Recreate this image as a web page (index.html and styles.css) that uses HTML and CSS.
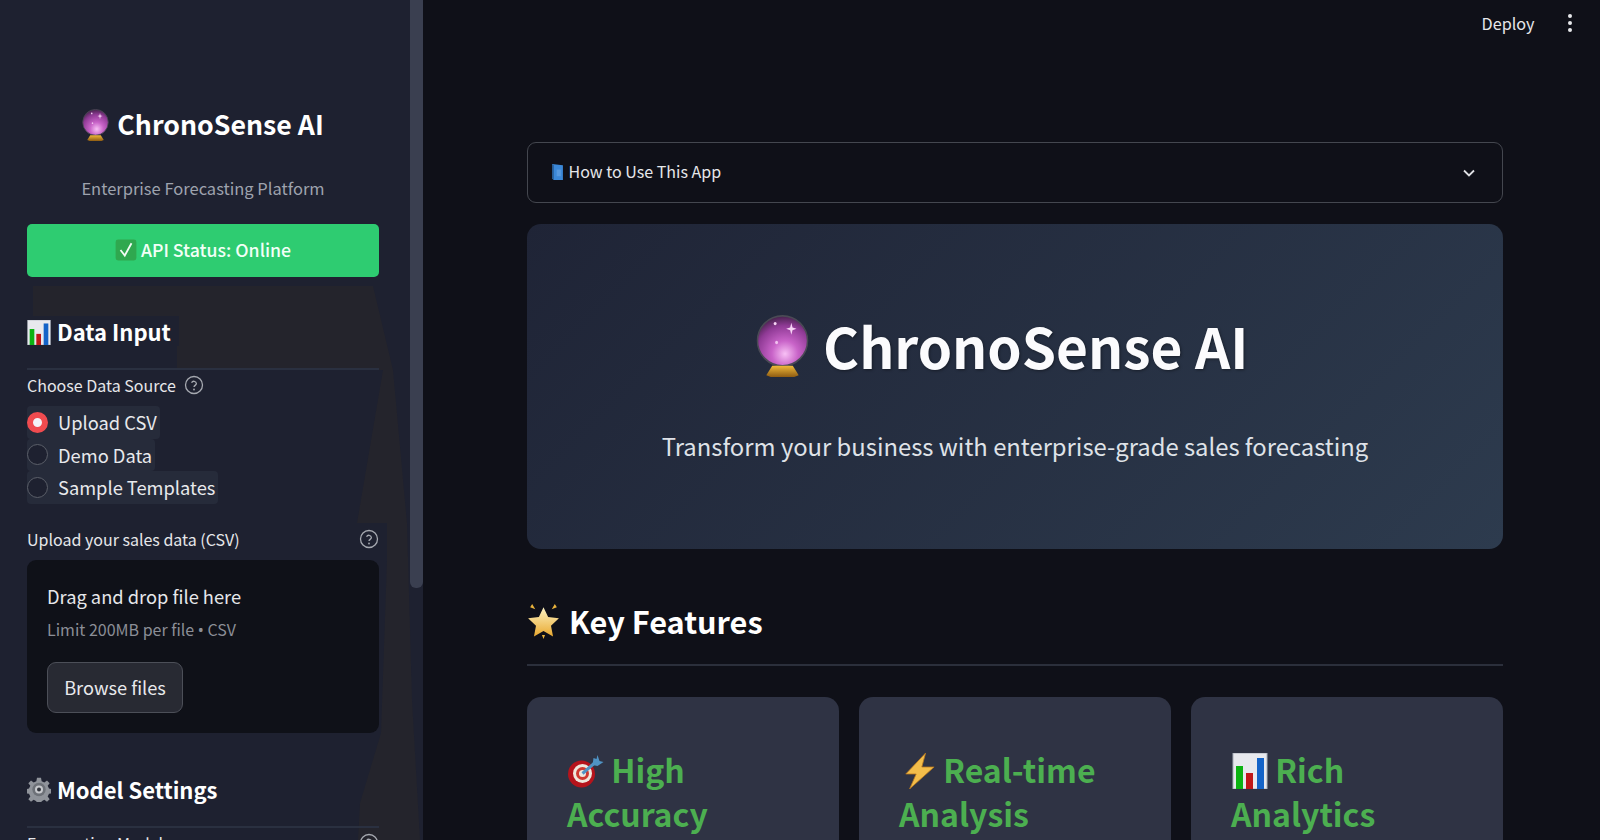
FILE: index.html
```html
<!DOCTYPE html>
<html lang="en">
<head>
    <meta charset="UTF-8">
    <meta name="viewport" content="width=device-width, initial-scale=1.0">
    <title>ChronoSense AI</title>
    <link rel="stylesheet" href="styles.css">
</head>
<body>

<!-- Shared emoji drawings -->
<svg class="defs" width="0" height="0" aria-hidden="true">
    <defs>
        <radialGradient id="ballFill" cx="55%" cy="76%" r="75%">
            <stop offset="0" stop-color="#f8c0f5"/>
            <stop offset="0.35" stop-color="#c863c8"/>
            <stop offset="0.75" stop-color="#8f3a95"/>
            <stop offset="1" stop-color="#4a2350"/>
        </radialGradient>
        <linearGradient id="baseFill" x1="0" y1="0" x2="0" y2="1">
            <stop offset="0" stop-color="#f0b93a"/>
            <stop offset="1" stop-color="#8f5c12"/>
        </linearGradient>
        <linearGradient id="starFill" x1="0" y1="0" x2="0" y2="1">
            <stop offset="0" stop-color="#fdf3c4"/>
            <stop offset="1" stop-color="#e9a92f"/>
        </linearGradient>
        <symbol id="emojiBall" viewBox="0 0 36 36" preserveAspectRatio="none">
            <ellipse cx="18" cy="15" rx="17" ry="14.500" fill="url(#ballFill)" stroke="#4a4a55" stroke-width="1"/>
            <path d="M24 4.500l.8 2.700 2.700.8-2.700.8-.8 2.700-.8-2.700-2.700-.8 2.700-.8z" fill="#f7d4f5"/>
            <circle cx="13" cy="5" r="1" fill="#f7d4f5"/>
            <circle cx="14" cy="16" r="1" fill="#f0c0ee"/>
            <path d="M11 29.500h14l4 5.500-3 1H10l-3-1z" fill="url(#baseFill)"/>
        </symbol>
        <symbol id="emojiCheck" viewBox="0 0 36 36">
            <rect x="1" y="1" width="34" height="34" rx="4" fill="#2fa84f"/>
            <path d="M9 18l7 9 11-20" fill="none" stroke="#f2fbf4" stroke-width="3"/>
        </symbol>
        <symbol id="emojiChart" viewBox="0 0 36 36" preserveAspectRatio="none">
            <rect x="1" y="0" width="34" height="36" fill="#e8e9ee" stroke="#aab0ba"/>
            <rect x="4" y="13" width="7" height="23" fill="#0cb312"/>
            <rect x="14" y="20" width="7" height="16" fill="#c01818"/>
            <rect x="25" y="5" width="7" height="31" fill="#1463c8"/>
        </symbol>
        <symbol id="emojiGear" viewBox="0 0 36 36">
            <path d="M15 1h6l1 5 4 2 4-3 4 4-3 4 2 4 5 1v6l-5 1-2 4 3 4-4 4-4-3-4 2-1 5h-6l-1-5-4-2-4 3-4-4 3-4-2-4-5-1v-6l5-1 2-4-3-4 4-4 4 3 4-2z" fill="#8f939a" transform="translate(0 -0.500)"/>
            <circle cx="18" cy="18" r="10" fill="#6d7178"/>
            <circle cx="18" cy="18" r="6" fill="#c7c9cd"/>
            <circle cx="18" cy="18" r="3" fill="#33363e"/>
        </symbol>
        <symbol id="emojiBook" viewBox="0 0 36 36" preserveAspectRatio="none">
            <path d="M5 2l26 3v31H9l-4-3z" fill="#3b88d8"/>
            <path d="M5 2l4 3v31l-4-3z" fill="#26598f"/>
            <path d="M16 14h10v14H16z" fill="#6aa6e6" opacity="0.6"/>
        </symbol>
        <symbol id="emojiStar" viewBox="0 0 36 36">
            <path d="M18 5l4.500 9.500 10.500 1.300-7.700 7.200 2 10.500L18 28.300 8.700 33.500l2-10.500L3 15.800l10.500-1.300z" fill="url(#starFill)"/>
            <path d="M7 2l3 5-5-2zM29 2l-3 5 5-2zM16.500 32h3L18 36z" fill="#e9b33c"/>
        </symbol>
        <symbol id="emojiTarget" viewBox="0 0 36 36">
            <circle cx="14" cy="21" r="13.500" fill="#b5141c"/>
            <circle cx="15" cy="20.500" r="9.500" fill="#efe7dc"/>
            <circle cx="15" cy="20.500" r="6.500" fill="#cf3a30"/>
            <circle cx="15" cy="20.500" r="3.500" fill="#efe7dc"/>
            <path d="M15 20.500L27 10" stroke="#4f93c4" stroke-width="3"/>
            <path d="M26 5l3 1 1-4 2 6 4 1-6 4-5-1z" fill="#4f93c4"/>
        </symbol>
        <symbol id="emojiBolt" viewBox="0 0 36 36" preserveAspectRatio="none">
            <path d="M25 0L4 21h11L8 36l26-22H21z" fill="#f3bd4a" stroke="#b9781c" stroke-width="0.800"/>
        </symbol>
        <symbol id="iconHelp" viewBox="0 0 20 20">
            <circle cx="10" cy="10" r="8.500" fill="none" stroke="currentColor" stroke-width="1.300"/>
            <path d="M7.600 7.800a2.500 2.500 0 0 1 4.800.7c0 1.700-2.400 2-2.400 3.500" fill="none" stroke="currentColor" stroke-width="1.300"/>
            <circle cx="10" cy="14.500" r="0.900" fill="currentColor"/>
        </symbol>
    </defs>
</svg>

<div class="app">

    <!-- Sidebar -->
    <aside class="sidebar">
        <div class="sidebarShade"></div>
        <div class="sidebarInner">
            <h2 class="brand"><svg class="emoji brandEmoji"><use href="#emojiBall"/></svg> ChronoSense AI</h2>
            <p class="brandSub">Enterprise Forecasting Platform</p>
            <div class="statusBox"><svg class="emoji statusEmoji"><use href="#emojiCheck"/></svg> API Status: Online</div>

            <h3 class="sideHeading"><span class="sideHeadingText"><svg class="emoji sideEmoji"><use href="#emojiChart"/></svg> Data Input</span></h3>
            <hr class="sideRule">

            <div class="fieldLabel firstLabel">
                <span>Choose Data Source</span>
                <svg class="helpIcon"><use href="#iconHelp"/></svg>
            </div>
            <div class="radioGroup">
                <label class="radioRow"><span class="radioDot radioOn"></span>Upload CSV</label>
                <label class="radioRow"><span class="radioDot"></span>Demo Data</label>
                <label class="radioRow"><span class="radioDot"></span>Sample Templates</label>
            </div>

            <div class="fieldLabel spreadLabel">
                <span>Upload your sales data (CSV)</span>
                <svg class="helpIcon"><use href="#iconHelp"/></svg>
            </div>
            <div class="dropZone">
                <div class="dropTitle">Drag and drop file here</div>
                <div class="dropHint">Limit 200MB per file <span class="dropBullet">•</span> CSV</div>
                <button class="browseBtn">Browse files</button>
            </div>

            <h3 class="sideHeading modelHeading"><span class="sideHeadingText"><svg class="emoji sideEmoji"><use href="#emojiGear"/></svg> Model Settings</span></h3>
            <hr class="sideRule">
            <div class="fieldLabel spreadLabel nextLabel">
                <span>Forecasting Model</span>
                <svg class="helpIcon"><use href="#iconHelp"/></svg>
            </div>
        </div>
        <div class="scrollThumb"></div>
    </aside>

    <!-- Main content -->
    <main class="main">
        <header class="topBar">
            <span class="deploy">Deploy</span>
            <span class="dots"><i></i><i></i><i></i></span>
        </header>

        <div class="content">
            <div class="expander">
                <span class="expanderTitle"><svg class="emoji bookEmoji"><use href="#emojiBook"/></svg> How to Use This App</span>
                <svg class="chevron" viewBox="0 0 16 16"><path d="M3 5.500l5 5 5-5" fill="none" stroke="currentColor" stroke-width="1.800"/></svg>
            </div>

            <section class="hero">
                <h1 class="heroTitle"><svg class="emoji heroEmoji"><use href="#emojiBall"/></svg> ChronoSense AI</h1>
                <p class="heroSub">Transform your business with enterprise-grade sales forecasting</p>
            </section>

            <h2 class="sectionTitle"><svg class="emoji sectionEmoji"><use href="#emojiStar"/></svg> Key Features</h2>
            <hr class="sectionRule">

            <div class="cards">
                <div class="card"><h3 class="cardTitle"><svg class="emoji cardEmoji targetEmoji"><use href="#emojiTarget"/></svg> High Accuracy</h3></div>
                <div class="card"><h3 class="cardTitle"><svg class="emoji cardEmoji boltEmoji"><use href="#emojiBolt"/></svg> Real-time Analysis</h3></div>
                <div class="card"><h3 class="cardTitle"><svg class="emoji cardEmoji chartEmoji"><use href="#emojiChart"/></svg> Rich Analytics</h3></div>
            </div>
        </div>
    </main>
</div>

</body>
</html>
```

FILE: styles.css
```css
/* Page */
html, body {
    margin: 0;
    height: 100%;
    overflow: hidden;
}

body {
    background: #0f1018;
    color: #fafafa;
    font-family: "Noto Sans CJK SC", "Noto Sans", sans-serif;
}

.defs {
    position: absolute;
}

.app {
    display: flex;
    height: 840px;
    overflow: hidden;
}

.emoji {
    display: inline-block;
    vertical-align: middle;
}

/* Sidebar */
.sidebar {
    position: relative;
    flex: 0 0 423px;
    height: 840px;
    overflow: hidden;
    background: #1e2130;
    border-right: 2px solid #0f1018;
}

/* Darker blotch behind the sidebar widgets */
.sidebarShade {
    position: absolute;
    inset: 0;
    background: #24242c;
    clip-path: polygon(33px 286px, 373px 286px, 393px 370px, 407px 523px, 412px 700px, 420px 840px, 358px 840px, 360px 803px, 381px 733px, 387px 560px, 387px 523px, 357px 523px, 383px 370px, 177px 370px, 177px 323px, 33px 323px);
}

.sidebarInner {
    position: relative;
    padding: 104px 44px 0 27px;
}

.scrollThumb {
    position: absolute;
    top: 0;
    right: 0;
    width: 13px;
    height: 588px;
    background: #3a3f50;
    border-radius: 0 0 6px 6px;
}

.brand {
    margin: 0;
    text-align: center;
    font-size: 26.700px;
    font-weight: 600;
    line-height: 40px;
    color: #ffffff;
}

.brandEmoji {
    width: 27px;
    height: 32px;
    margin-top: -6px;
    margin-right: 2px;
}

.brandSub {
    margin: 32px 0 0;
    text-align: center;
    font-size: 16.500px;
    line-height: 24px;
    color: #9ea3ae;
}

.statusBox {
    margin-top: 24px;
    height: 53px;
    line-height: 51px;
    text-align: center;
    background: #2ecc71;
    border-radius: 5px;
    font-size: 17.700px;
    font-weight: 500;
    color: #f2fff7;
}

.statusEmoji {
    width: 22px;
    height: 22px;
    margin-top: -4px;
}

.sideHeading {
    margin: 39px 0 0;
    font-size: 22px;
    font-weight: 600;
    line-height: 30px;
    color: #ffffff;
    position: relative;
}

.sideHeadingText {
    display: inline-block;
    padding-right: 8px;
    background: #1e2130;
}

.sideEmoji {
    width: 24px;
    height: 25px;
    margin-top: -6px;
    margin-right: 1px;
}

.sideRule {
    margin: 22px 0 0;
    border: 0;
    height: 2px;
    background: #2a3040;
    position: relative;
}

.fieldLabel {
    display: flex;
    align-items: center;
    gap: 8px;
    font-size: 16px;
    line-height: 22px;
    color: #e6e7ea;
}

.firstLabel {
    margin-top: 4px;
}

.spreadLabel {
    justify-content: space-between;
}

.helpIcon {
    width: 20px;
    height: 20px;
    color: #a6a9b0;
}

.radioGroup {
    display: flex;
    flex-direction: column;
    align-items: flex-start;
    margin-top: 10px;
    margin-bottom: 24px;
}

.radioRow {
    display: flex;
    align-items: center;
    gap: 10px;
    height: 32.500px;
    padding-right: 3px;
    background: #262b3a;
    border-radius: 4px;
    font-size: 18.300px;
    color: #e8e9ec;
}

.radioDot {
    box-sizing: border-box;
    width: 21px;
    height: 21px;
    border: 1.500px solid #5b5f69;
    border-radius: 50%;
    background: #1e2130;
}

.radioOn {
    border: 6.500px solid #f04b4f;
    background: #f3f3f7;
}

.dropZone {
    box-sizing: border-box;
    height: 173px;
    margin-top: 10px;
    padding: 21px 20px 0;
    background: #0f1118;
    border-radius: 9px;
}

.dropTitle {
    font-size: 18.300px;
    line-height: 30px;
    color: #e6e7ea;
}

.dropHint {
    margin-top: 6px;
    font-size: 16px;
    line-height: 24px;
    color: #8b8e96;
}

.dropBullet {
    font-family: "Noto Sans", sans-serif;
}

.browseBtn {
    display: block;
    box-sizing: border-box;
    width: 136px;
    height: 51px;
    margin-top: 20px;
    padding: 0;
    background: #282a33;
    border: 1px solid #4c4f58;
    border-radius: 9px;
    font-family: inherit;
    font-size: 18.200px;
    color: #e8e9ec;
}

.modelHeading {
    margin-top: 41px;
}

.nextLabel {
    margin-top: 4px;
}

/* Main column */
.main {
    flex: 1;
    min-width: 0;
}

.topBar {
    display: flex;
    justify-content: flex-end;
    align-items: center;
    gap: 33px;
    height: 46px;
    padding-right: 28px;
}

.deploy {
    font-size: 16.200px;
    color: #e6e7ea;
}

.dots {
    display: flex;
    flex-direction: column;
    gap: 2.500px;
}

.dots i {
    display: block;
    width: 4.500px;
    height: 4.500px;
    border-radius: 50%;
    background: #e6e7ea;
}

.content {
    width: 976px;
    margin-left: 102px;
    padding-top: 96px;
}

.expander {
    display: flex;
    align-items: center;
    justify-content: space-between;
    box-sizing: border-box;
    height: 61px;
    padding: 0 25px 0 22px;
    border: 1px solid #44474f;
    border-radius: 9px;
}

.expanderTitle {
    padding-bottom: 3px;
    font-size: 16px;
    color: #e6e7ea;
}

.bookEmoji {
    width: 15px;
    height: 17px;
    margin-top: -4px;
}

.chevron {
    width: 16px;
    height: 16px;
    color: #dfe0e4;
}

.hero {
    box-sizing: border-box;
    height: 325px;
    margin-top: 21px;
    padding-top: 81px;
    text-align: center;
    background: linear-gradient(135deg, #1f2436, #2d3b4e);
    border-radius: 14px;
}

.heroTitle {
    margin: 0;
    padding-right: 26px;
    font-size: 55px;
    font-weight: 700;
    line-height: 80px;
    color: #fbfbfd;
    text-shadow: 1px 1px 3px rgba(0, 0, 0, 0.4);
}

.heroEmoji {
    width: 53px;
    height: 62px;
    margin-top: -16px;
    margin-right: 2px;
}

.heroSub {
    margin: 42px 0 0;
    font-size: 23.800px;
    line-height: 38px;
    color: #dfe2e8;
}

.sectionTitle {
    margin: 48px 0 0;
    font-size: 30.700px;
    font-weight: 600;
    line-height: 48px;
    color: #ffffff;
}

.sectionEmoji {
    width: 37px;
    height: 37px;
    margin-top: -10px;
    margin-left: -2px;
}

.sectionRule {
    margin: 19px 0 0;
    border: 0;
    height: 2px;
    background: #2b2f3b;
}

.cards {
    display: grid;
    grid-template-columns: repeat(3, 1fr);
    gap: 20px;
    margin-top: 31px;
}

.card {
    box-sizing: border-box;
    height: 240px;
    padding: 50px 40px 0;
    background: #2f3344;
    border-radius: 14px;
}

.cardTitle {
    margin: 0;
    font-size: 32px;
    font-weight: 600;
    line-height: 44px;
    color: #4caf50;
}

.cardEmoji {
    width: 36px;
    height: 36px;
    margin-top: -6px;
}

.targetEmoji {
    width: 37px;
}

.boltEmoji {
    width: 34px;
    margin-left: 3px;
}

.chartEmoji {
    margin-left: 1px;
}
```
